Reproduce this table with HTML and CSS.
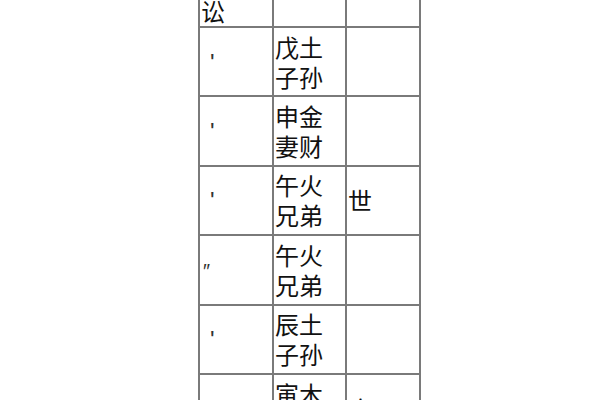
FILE: index.html
```html
<!DOCTYPE html>
<html>
<head>
<meta charset="utf-8">
<link rel="stylesheet" href="styles.css">
</head>
<body>
<table class="gua">
  <colgroup><col class="c1"><col class="c2"><col class="c3"></colgroup>
  <tr class="top">
    <td class="yao">讼</td><td class="name"></td><td class="shi"></td>
  </tr>
  <tr>
    <td class="yao"><span class="mark">'</span></td><td class="name">戊土<br>子孙</td><td class="shi"></td>
  </tr>
  <tr>
    <td class="yao"><span class="mark">'</span></td><td class="name">申金<br>妻财</td><td class="shi"></td>
  </tr>
  <tr>
    <td class="yao"><span class="mark">'</span></td><td class="name">午火<br>兄弟</td><td class="shi">世</td>
  </tr>
  <tr>
    <td class="yao"><span class="mark dbl">″</span></td><td class="name">午火<br>兄弟</td><td class="shi"></td>
  </tr>
  <tr>
    <td class="yao"><span class="mark">'</span></td><td class="name">辰土<br>子孙</td><td class="shi"></td>
  </tr>
  <tr>
    <td class="yao"><span class="mark dbl">″</span></td><td class="name">寅木<br>兄弟</td><td class="shi">应</td>
  </tr>
</table>
</body>
</html>
```

FILE: styles.css
```css
html, body {
  margin: 0;
  padding: 0;
  background: #ffffff;
  overflow: hidden;
}

.gua {
  border-collapse: collapse;
  table-layout: fixed;
  margin-left: 198px;
  margin-top: -34px;
  font-family: "Noto Sans CJK SC", "Noto Sans", sans-serif;
  font-size: 24px;
  line-height: 30px;
  color: #111111;
}

.c1 { width: 74px; }
.c2 { width: 73px; }
.c3 { width: 74px; }

.gua td {
  border: 2px solid #7a7a7a;
  height: 69.4px;
  padding: 0 1px;
  vertical-align: middle;
  text-align: left;
  box-sizing: border-box;
}

.gua tr.top td {
  height: 60px;
  vertical-align: bottom;
}

.mark {
  font-family: "Liberation Sans", sans-serif;
  font-size: 24px;
  color: #333;
  padding-left: 9px;
}

.mark.dbl {
  padding-left: 1px;
  font-style: italic;
  font-size: 20px;
}
```
